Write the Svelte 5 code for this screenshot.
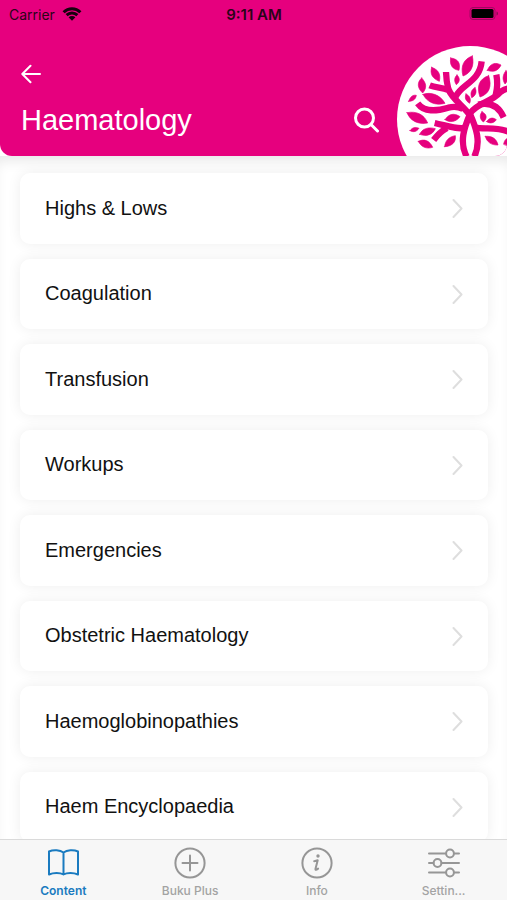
<script>
  const topics = [
    'Highs & Lows',
    'Coagulation',
    'Transfusion',
    'Workups',
    'Emergencies',
    'Obstetric Haematology',
    'Haemoglobinopathies',
    'Haem Encyclopaedia',
  ];

  const tabs = [
    { id: 'content', label: 'Content' },
    { id: 'plus', label: 'Buku Plus' },
    { id: 'info', label: 'Info' },
    { id: 'settings', label: 'Settin...' },
  ];

  let active = $state('content');
</script>

<div class="screen">
  <header class="header">
    <div class="status">
      <span class="carrier">
        Carrier
        <svg width="20" height="14" viewBox="0 0 20 14" aria-hidden="true">
          <path d="M1.6 5.2a12 12 0 0 1 16.8 0" />
          <path d="M4.6 8.2a7.8 7.8 0 0 1 10.8 0" />
          <path class="solid" d="M6.6 10.3a4.8 4.8 0 0 1 6.8 0L10 13.7z" />
        </svg>
      </span>
      <time class="time">9:11 AM</time>
      <svg class="battery" width="30" height="14" viewBox="0 0 30 14" aria-hidden="true">
        <rect class="shell" x="1" y="0.5" width="25" height="12" rx="3" />
        <rect x="2.500" y="2" width="22" height="9" rx="1.500" />
        <path class="tip" d="M27.5 4.500c2 .5 2 3.500 0 4z" />
      </svg>
    </div>

    <div class="bar">
      <div class="heading">
        <button type="button" class="icon-button" aria-label="Back">
          <svg width="20" height="20" viewBox="0 0 20 20">
            <path d="M19 10H1.500M9.500 1.800 1.300 10l8.200 8.200" />
          </svg>
        </button>
        <h1>Haematology</h1>
      </div>

      <button type="button" class="icon-button search" aria-label="Search">
        <svg width="26" height="26" viewBox="0 0 26 26">
          <circle cx="11.500" cy="11" r="9" />
          <path d="m18 17.500 6.500 6.500" />
        </svg>
      </button>

      <svg class="logo" width="110" height="110" viewBox="30 18 330 330" aria-hidden="true">
        <circle class="disc" cx="250" cy="238" r="220" />
        <!-- trunk and branches -->
        <g class="branch">
          <path d="M239 350C216 306 232 262 249 222C267 262 283 306 262 350" />
          <path d="M249 226C228 196 196 178 184 147Q178 125 177 96" />
          <path d="M128 136C147 144 166 142 183 150" />
          <path d="M206 170C222 133 278 126 284 64" />
          <path d="M249 220C277 184 309 190 340 156Q360 143 372 146" />
          <path d="M328 104Q334 133 326 166" />
          <path d="M92 190C112 218 147 214 184 203Q208 197 228 207" />
          <path d="M274 194Q327 181 350 232" />
          <path d="M236 263C211 269 183 258 143 249" />
          <path d="M180 264Q158 276 140 300" />
          <path d="M265 263C294 269 328 258 366 276" />
        </g>
        <!-- leaves -->
        <g class="leaves">
          <path d="M191 54C214 57 221 69 216 91C197 88 187 76 191 54Z" />
          <path d="M256 48C263 78 252 99 228 108C220 78 230 57 256 48Z" />
          <path d="M301 91C310 69 326 66 342 75C334 93 318 98 301 91Z" />
          <path d="M134 82C154 89 162 102 157 124C136 115 128 102 134 82Z" />
          <path d="M104 114C119 130 120 144 107 159C91 144 89 128 104 114Z" />
          <path d="M210 105C220 114 219 126 208 134C201 124 201 113 210 105Z" />
          <path d="M305 107C316 140 306 162 279 171C268 140 276 116 305 107Z" />
          <path d="M357 92C368 106 366 120 354 132C345 118 347 104 357 92Z" />
          <path d="M108 163C132 154 160 165 174 190C145 198 120 187 108 163Z" />
          <path d="M65 184C70 169 78 164 88 166C86 178 78 184 65 184Z" />
          <path d="M264 143C271 156 266 167 254 173C249 159 253 149 264 143Z" />
          <path d="M237 162C249 168 253 178 248 190C236 183 232 173 237 162Z" />
          <path d="M60 218C89 212 112 224 122 249C93 254 70 243 60 218Z" />
          <path d="M174 239C186 221 201 218 219 230C206 246 190 249 174 239Z" />
          <path d="M285 215C301 224 301 235 289 246C278 237 277 225 285 215Z" />
          <path d="M299 245C306 233 317 231 328 239C321 249 310 252 299 245Z" />
          <path d="M69 272C76 262 85 260 96 265C89 275 80 278 69 272Z" />
          <path d="M98 283C105 266 123 260 145 266C137 284 119 291 98 283Z" />
          <path d="M94 304C112 295 128 302 137 322C118 328 102 321 94 304Z" />
          <path d="M173 320C174 302 186 290 205 287C208 306 195 319 173 320Z" />
          <path d="M295 289C316 287 329 297 333 315C313 316 299 306 295 289Z" />
          <path d="M350 312C352 300 358 294 370 292V320Z" />
        </g>
      </svg>
    </div>
  </header>

  <main class="content">
    <ul class="topics">
      {#each topics as topic}
        <li>
          <button type="button" class="topic">
            <span>{topic}</span>
            <svg width="12" height="20" viewBox="0 0 12 20" aria-hidden="true">
              <path d="m2.500 2 8 8.500-8 8.500" />
            </svg>
          </button>
        </li>
      {/each}
    </ul>
  </main>

  <nav class="tabs">
    {#each tabs as tab}
      <button
        type="button"
        class="tab"
        class:active={active === tab.id}
        aria-current={active === tab.id ? 'page' : undefined}
        onclick={() => (active = tab.id)}
      >
        <svg width="32" height="32" viewBox="0 0 32 32" aria-hidden="true">
          {#if tab.id === 'content'}
            <path d="M16.500 5.500C13 3 6.500 2.500 2 4.500V27.500C6.500 25.500 13 25.500 16.500 27.500C20 25.500 26.500 25.500 31 27.500V4.500C26.500 2.500 20 3 16.500 5.500V27.500" />
          {:else if tab.id === 'plus'}
            <circle cx="16" cy="16" r="14.600" />
            <path d="M16 8.500v15M8.500 16h15" />
          {:else if tab.id === 'info'}
            <circle cx="16" cy="16" r="14.600" />
            <circle class="dot" cx="17" cy="9" r="1.700" />
            <path class="stem" d="M13.200 14.200q2-.2 3.500-1l-2.200 8.600q-.4 2.200 2.600-.2" />
          {:else}
            <path d="M1 6.500h17M26 6.500h5M1 16h4.500M13.500 16H31M1 25.500h17M26 25.500h5" />
            <circle cx="22" cy="6.500" r="3.900" />
            <circle cx="9.500" cy="16" r="3.900" />
            <circle cx="22" cy="25.500" r="3.900" />
          {/if}
        </svg>
        <span>{tab.label}</span>
      </button>
    {/each}
  </nav>
</div>

<style>
  :global(body) {
    background: #fff;
  }

  .screen {
    display: flex;
    flex-direction: column;
    min-height: 100vh;
    font-family: 'Liberation Sans', Arial, sans-serif;
    color: #111;
  }

  button {
    margin: 0;
    padding: 0;
    border: 0;
    background: none;
    font: inherit;
    color: inherit;
    cursor: pointer;
  }

  svg {
    display: block;
    flex: none;
    fill: none;
    stroke: currentColor;
    stroke-linecap: round;
    stroke-linejoin: round;
  }

  .header {
    position: relative;
    z-index: 1;
    overflow: hidden;
    border-radius: 0 0 12px 12px;
    background: #e6007e;
    color: #fff;
  }

  .status {
    display: grid;
    grid-template-columns: 1fr auto 1fr;
    align-items: center;
    height: 28px;
    padding: 0 8px 0 9px;
    font-family: Inter, 'Liberation Sans', sans-serif;
    font-size: 14px;
    color: #2a0418;
  }

  .carrier {
    display: flex;
    align-items: center;
    gap: 7px;
  }

  .carrier svg {
    stroke-width: 3;
    stroke-linecap: butt;
    color: #16020d;
  }

  .carrier .solid {
    fill: currentColor;
    stroke: none;
  }

  .time {
    font-size: 15px;
    font-weight: 600;
  }

  .battery {
    justify-self: end;
    fill: #000;
    stroke: none;
  }

  .battery .shell {
    fill: none;
    stroke: #a00860;
    stroke-width: 1;
  }

  .battery .tip {
    fill: #8c0a52;
  }

  .bar {
    display: flex;
    align-items: flex-end;
    height: 128px;
  }

  .heading {
    flex: 1;
    padding: 0 0 19px 21px;
  }

  .icon-button {
    display: block;
  }

  .icon-button svg {
    stroke-width: 2;
  }

  h1 {
    margin: 19px 0 0;
    font-size: 29px;
    font-weight: 400;
    line-height: 34px;
  }

  .search {
    margin: 0 18px 23px 0;
  }

  .search svg {
    stroke-width: 3;
  }

  .logo .disc {
    fill: #fff;
    stroke: none;
  }

  .logo .branch {
    stroke: #e6007e;
    stroke-width: 19;
    stroke-linecap: butt;
  }

  .logo .leaves {
    fill: #e6007e;
    stroke: #e6007e;
    stroke-width: 2;
  }

  .content {
    display: flex;
    flex: 1;
    flex-direction: column;
    padding: 17px 19px 0 20px;
    box-shadow: inset 0 10px 14px -6px rgba(0, 0, 0, 0.1);
  }

  .topics {
    display: grid;
    flex: 1;
    grid-auto-rows: 1fr;
    gap: 15px;
    margin: 0;
    padding: 0;
    list-style: none;
  }

  .topics li {
    display: flex;
    border-radius: 10px;
    background: #fff;
    box-shadow: 0 0 14px rgba(0, 0, 0, 0.07);
  }

  .topic {
    display: flex;
    flex: 1;
    align-items: center;
    justify-content: space-between;
    min-height: 64px;
    padding: 0 25px;
    font-size: 20px;
    text-align: left;
  }

  .topic svg {
    stroke-width: 2;
    color: #dedede;
  }

  /* The last card runs a little way under the tab bar. */
  .tabs {
    position: sticky;
    bottom: 0;
    z-index: 1;
    display: grid;
    grid-template-columns: repeat(4, 1fr);
    box-sizing: border-box;
    height: 61px;
    margin-top: -3px;
    border-top: 1px solid #dadada;
    background: #f7f7f7;
  }

  .tab {
    display: flex;
    flex-direction: column;
    align-items: center;
    gap: 4px;
    padding-top: 7px;
    font-family: Inter, 'Liberation Sans', sans-serif;
    font-size: 12px;
    font-weight: 500;
    line-height: 16px;
    color: #a3a3a3;
  }

  .tab.active {
    font-weight: 600;
    color: #1a7bc0;
  }

  .tab svg {
    stroke-width: 2;
    color: #969696;
  }

  .tab.active svg {
    color: #1a7bc0;
  }

  .tab .dot {
    fill: currentColor;
    stroke: none;
  }

  .tab .stem {
    stroke-width: 2;
  }
</style>
